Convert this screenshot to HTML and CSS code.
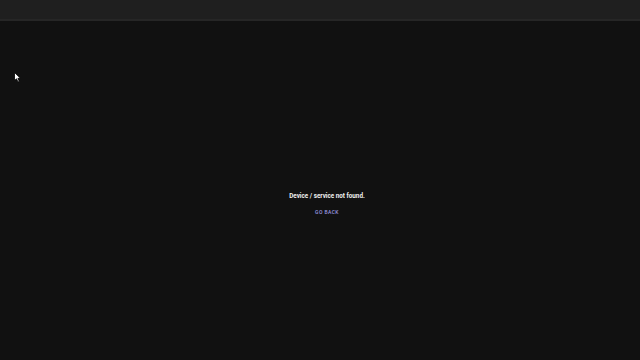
FILE: index.html
```html
<!DOCTYPE html>
<html>
<head>
<meta charset="utf-8">
<link rel="stylesheet" href="styles.css">
</head>
<body>
<div class="app">
  <header class="topbar"></header>
  <main class="content">
    <div class="message">
      <p class="title">Device / service not found.</p>
      <button class="back">GO BACK</button>
    </div>
  </main>
  <svg class="cursor" width="8" height="11" viewBox="0 0 8 11"><path d="M0.5 0.5 L0.5 8.5 L2.5 6.8 L4 10 L5.3 9.4 L3.9 6.3 L6.5 6.3 Z" fill="#fff" stroke="#000" stroke-width="0.8"/></svg>
</div>
</body>
</html>
```
FILE: styles.css
```css
html, body {
  margin: 0;
  padding: 0;
  background: #111111;
  font-family: Roboto, "Liberation Sans", sans-serif;
}
.app {
  position: relative;
  width: 640px;
  height: 360px;
  display: flex;
  flex-direction: column;
}
.topbar {
  height: 19px;
  background: #1f1f1f;
  border-bottom: 2px solid #262626;
  flex: none;
}
.content {
  flex: 1;
  display: flex;
  align-items: center;
  justify-content: center;
  padding-left: 14px;
  padding-top: 25px;
}
.message {
  display: flex;
  flex-direction: column;
  align-items: center;
}
.title {
  margin: 0;
  color: #f0f0f0;
  font-size: 6.3px;
  font-weight: 700;
}
.back {
  margin-top: 9px;
  background: none;
  border: none;
  padding: 0;
  color: #9d9be0;
  font-family: Roboto, "Liberation Sans", sans-serif;
  font-size: 5px;
  font-weight: 500;
  letter-spacing: 0.4px;
}
.cursor {
  position: absolute;
  left: 14px;
  top: 72px;
}
```
